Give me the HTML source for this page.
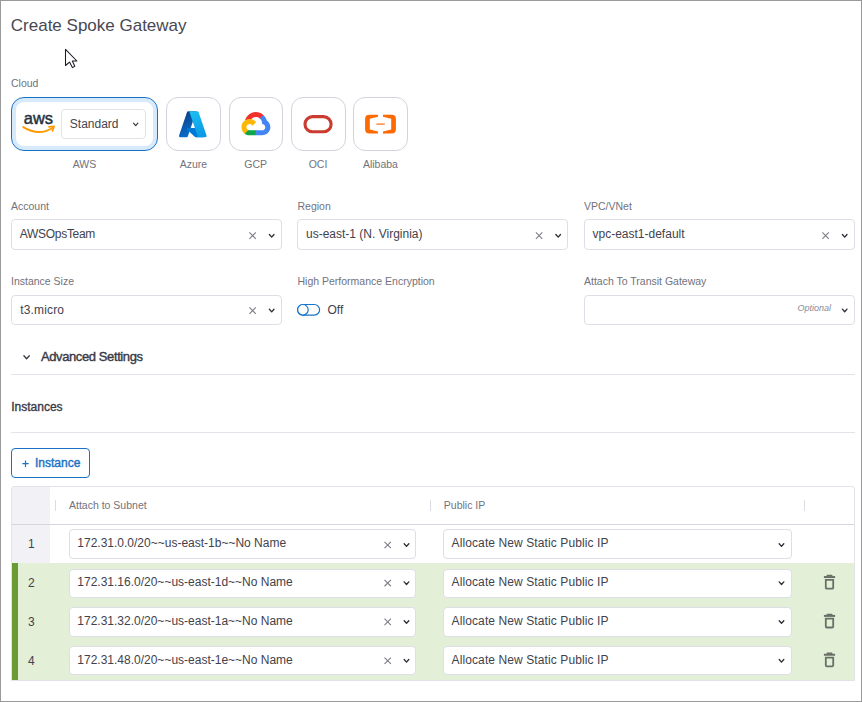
<!DOCTYPE html>
<html>
<head>
<meta charset="utf-8">
<style>
html,body{margin:0;padding:0;}
body{width:862px;height:702px;position:relative;overflow:hidden;background:#fff;font-family:"Liberation Sans",sans-serif;}
.frame{position:absolute;left:0;top:0;width:860px;height:700px;border:1px solid #9a9a9a;}
.t{position:absolute;white-space:nowrap;line-height:1;}
.lbl{font-size:10.5px;color:#72727c;}
.val{font-size:12px;color:#42424c;}
.card{position:absolute;box-sizing:border-box;top:97px;height:54px;width:54.5px;border:1px solid #d3d3de;border-radius:12px;background:#fff;}
.inp{position:absolute;box-sizing:border-box;border:1px solid #dedee6;border-radius:4px;background:#fff;}
svg{position:absolute;overflow:visible;}
</style>
</head>
<body>
<div class="frame"></div>

<!-- Title -->
<div class="t" style="left:10.8px;top:16.6px;font-size:17px;color:#484853;">Create Spoke Gateway</div>

<!-- Cloud -->
<div class="t lbl" style="left:11px;top:77.8px;">Cloud</div>

<!-- AWS card -->
<div style="position:absolute;left:11px;top:97px;width:147px;height:54px;box-sizing:border-box;border:1px solid #1a72c6;border-radius:13px;box-shadow:inset 0 0 0 4px #d7eafb;background:#fff;"></div>
<div class="inp" style="left:61.4px;top:109.3px;width:84.2px;height:29.5px;border-color:#e2e2e8;"></div>
<div class="t" style="left:69.8px;top:117.7px;font-size:12px;color:#45454f;">Standard</div>
<div class="card" style="left:166px;"></div>
<div class="card" style="left:228.5px;"></div>
<div class="card" style="left:291px;"></div>
<div class="card" style="left:353.3px;"></div>

<div class="t lbl" style="left:84.5px;top:159px;transform:translateX(-50%);">AWS</div>
<div class="t lbl" style="left:193.5px;top:159px;transform:translateX(-50%);">Azure</div>
<div class="t lbl" style="left:255.7px;top:159px;transform:translateX(-50%);">GCP</div>
<div class="t lbl" style="left:318px;top:159px;transform:translateX(-50%);">OCI</div>
<div class="t lbl" style="left:380.4px;top:159px;transform:translateX(-50%);">Alibaba</div>

<!-- Row 1 fields -->
<div class="t lbl" style="left:11px;top:201px;">Account</div>
<div class="t lbl" style="left:297.5px;top:201px;">Region</div>
<div class="t lbl" style="left:584px;top:201px;">VPC/VNet</div>
<div class="inp" style="left:11px;top:219px;width:271px;height:30.8px;"></div>
<div class="inp" style="left:297.2px;top:219px;width:271px;height:30.8px;"></div>
<div class="inp" style="left:584px;top:219px;width:271px;height:30.8px;"></div>
<div class="t val" style="left:19.8px;top:227.6px;letter-spacing:-0.3px;">AWSOpsTeam</div>
<div class="t val" style="left:306px;top:227.6px;">us-east-1 (N. Virginia)</div>
<div class="t val" style="left:592.5px;top:227.6px;">vpc-east1-default</div>

<!-- Row 2 fields -->
<div class="t lbl" style="left:11px;top:276px;">Instance Size</div>
<div class="t lbl" style="left:297.5px;top:276px;">High Performance Encryption</div>
<div class="t lbl" style="left:584px;top:276px;">Attach To Transit Gateway</div>
<div class="inp" style="left:11px;top:295px;width:271px;height:29.8px;"></div>
<div class="inp" style="left:584px;top:295px;width:271px;height:29.8px;"></div>
<div class="t val" style="left:20.3px;top:303.7px;letter-spacing:0.15px;">t3.micro</div>
<div class="t val" style="left:327.5px;top:303.5px;">Off</div>
<div class="t" style="left:797.5px;top:304.4px;font-size:9px;font-style:italic;color:#8a8a94;">Optional</div>

<!-- Advanced settings -->
<div class="t" style="left:41px;top:349.8px;font-size:13px;color:#3a3a45;letter-spacing:-0.4px;-webkit-text-stroke:0.4px #3a3a45;">Advanced Settings</div>
<div style="position:absolute;left:11px;top:374px;width:844px;height:1px;background:#e3e3ea;"></div>
<div class="t" style="left:11.2px;top:400.7px;font-size:12px;color:#3a3a45;-webkit-text-stroke:0.35px #3a3a45;">Instances</div>
<div style="position:absolute;left:11px;top:431.5px;width:844px;height:1px;background:#e3e3ea;"></div>

<!-- Button -->
<div style="position:absolute;left:11px;top:448px;width:79px;height:30px;box-sizing:border-box;border:1px solid #1a72c6;border-radius:4px;"></div>
<div class="t" style="left:35px;top:457px;font-size:12px;color:#1a72c6;-webkit-text-stroke:0.4px #1a72c6;">Instance</div>

<!-- Table -->
<div style="position:absolute;left:11px;top:486px;width:844px;height:195px;box-sizing:border-box;border:1px solid #e2e2e9;border-radius:3px 3px 0 0;background:#fff;overflow:hidden;">
  <div style="position:absolute;left:0;top:0;width:38px;height:38.2px;background:#f1f1f6;"></div>
  <div style="position:absolute;left:0;top:37.2px;width:842px;height:1px;background:#d6d6df;"></div>
  <div style="position:absolute;left:0;top:38.2px;width:38px;height:37.8px;background:#f1f1f6;"></div>
  <div style="position:absolute;left:0;top:76px;width:842px;height:117.6px;background:#e3f0d7;"></div>
  <div style="position:absolute;left:0;top:76px;width:6px;height:117.6px;background:#6a9b35;"></div>
  <div style="position:absolute;left:43px;top:13px;width:1px;height:11px;background:#dcdce4;"></div>
  <div style="position:absolute;left:418px;top:13px;width:1px;height:11px;background:#dcdce4;"></div>
  <div style="position:absolute;left:792px;top:13px;width:1px;height:11px;background:#dcdce4;"></div>
</div>
<div class="t lbl" style="left:69px;top:499.7px;">Attach to Subnet</div>
<div class="t lbl" style="left:443.8px;top:500px;">Public IP</div>

<!-- rows -->
<div class="t val" style="left:28px;top:538.2px;">1</div>
<div class="t val" style="left:28px;top:576.9px;">2</div>
<div class="t val" style="left:28px;top:615.75px;">3</div>
<div class="t val" style="left:28px;top:654.6px;">4</div>

<div class="inp" style="left:69.1px;top:529.2px;width:347px;height:30.3px;"></div>
<div class="inp" style="left:69.1px;top:568.50px;width:347px;height:29.2px;"></div>
<div class="inp" style="left:69.1px;top:607.35px;width:347px;height:29.2px;"></div>
<div class="inp" style="left:69.1px;top:646.20px;width:347px;height:29.2px;"></div>
<div class="inp" style="left:443.2px;top:529.2px;width:348.6px;height:30.3px;"></div>
<div class="inp" style="left:443.2px;top:568.50px;width:348.6px;height:29.2px;"></div>
<div class="inp" style="left:443.2px;top:607.35px;width:348.6px;height:29.2px;"></div>
<div class="inp" style="left:443.2px;top:646.20px;width:348.6px;height:29.2px;"></div>

<div class="t val" style="left:77.3px;top:537.4px;">172.31.0.0/20~~us-east-1b~~No Name</div>
<div class="t val" style="left:77.3px;top:576.1px;">172.31.16.0/20~~us-east-1d~~No Name</div>
<div class="t val" style="left:77.3px;top:614.95px;">172.31.32.0/20~~us-east-1a~~No Name</div>
<div class="t val" style="left:77.3px;top:653.8px;">172.31.48.0/20~~us-east-1e~~No Name</div>
<div class="t val" style="left:451.6px;top:537.4px;letter-spacing:0.1px;">Allocate New Static Public IP</div>
<div class="t val" style="left:451.6px;top:576.1px;letter-spacing:0.1px;">Allocate New Static Public IP</div>
<div class="t val" style="left:451.6px;top:614.95px;letter-spacing:0.1px;">Allocate New Static Public IP</div>
<div class="t val" style="left:451.6px;top:653.8px;letter-spacing:0.1px;">Allocate New Static Public IP</div>

<!-- ICONS overlay -->
<svg width="862" height="702" style="left:0;top:0;" viewBox="0 0 862 702">
<path d="M65.5 49.3 L65.5 65.5 L69.5 62.1 L72.4 67.6 L74.8 66.3 L72.3 61.1 L76.9 61.0 Z" fill="#fff" stroke="#1b1b26" stroke-width="1.05" stroke-linejoin="round"/>
<text x="23.8" y="123.8" font-family="Liberation Sans" font-weight="normal" font-size="16.2" fill="#252f3e" stroke="#252f3e" stroke-width="0.45" textLength="29.2" lengthAdjust="spacingAndGlyphs">aws</text>
<path d="M23.3 127.1 Q38.5 136.6 52.3 128.0" fill="none" stroke="#ff9900" stroke-width="1.9" stroke-linecap="round"/>
<path d="M49.0 126.9 L54.1 126.3 L52.5 130.9" fill="none" stroke="#ff9900" stroke-width="1.7" stroke-linecap="round" stroke-linejoin="round"/>
<defs>
<linearGradient id="az1" x1="0" y1="0" x2="0.3" y2="1"><stop offset="0" stop-color="#0b3c82"/><stop offset="1" stop-color="#0a6cc8"/></linearGradient>
<linearGradient id="az2" x1="0" y1="0" x2="0.3" y2="1"><stop offset="0" stop-color="#1cc0f2"/><stop offset="1" stop-color="#0c9ce7"/></linearGradient>
</defs>
<g transform="translate(177.75 109.2) scale(0.3135)">
<path fill="url(#az1)" d="M33.338 6.544h26.038l-27.03 80.087a4.152 4.152 0 0 1-3.933 2.824H8.149a4.145 4.145 0 0 1-3.928-5.47L29.404 9.368a4.152 4.152 0 0 1 3.934-2.825z"/>
<path fill="#0078d4" d="M71.175 60.261h-41.29a1.911 1.911 0 0 0-1.305 3.309l26.532 24.764a4.171 4.171 0 0 0 2.846 1.121h23.38z"/>
<path fill="url(#az2)" d="M66.595 9.364a4.145 4.145 0 0 0-3.928-2.82H33.648a4.146 4.146 0 0 1 3.928 2.820l25.184 74.62a4.146 4.146 0 0 1-3.928 5.472h29.02a4.146 4.146 0 0 0 3.927-5.472z"/>
</g>
<g transform="translate(241.5 112.1) scale(0.0121)">
<path fill="#f0312c" d="M1513.8,528.7h72.8l207.4-207.4l10.2-88c-385.9-340.6-975-303.9-1315.6,82C393.9,422.5,325.2,550,287.8,688c23.1-9.5,48.7-11,72.8-4.4l414.7-68.4c0,0,21.1-34.9,32-32.7c184.5-202.6,495-226.2,708-53.8H1513.8z"/>
<path fill="#4285f4" d="M2089.4,688c-47.7-175.5-145.5-333.3-281.6-454l-291,291c122.9,100.4,192.9,251.7,189.9,410.4v51.7c143.1,0,259,116,259,259c0,143.1-116,259-259,259h-518.1l-51.7,52.4v310.7l51.7,51.7h518.1c297,2.3,560.4-190.2,648.4-473.8C2443.4,1162.4,2335.2,854.4,2089.4,688L2089.4,688z"/>
<path fill="#0fa548" d="M669.8,1917h518.1v-414.7H669.8c-36.9,0-73.4-7.9-107-23.3l-72.8,22.5l-208.8,207.4l-18.2,72.8C380.1,1870.7,523,1917.7,669.8,1917L669.8,1917z"/>
<path fill="#fdb603" d="M669.8,571.6c-287.8,1.7-542.7,186-634.5,458.7c-91.8,272.7-0.3,573.7,227.8,749.1l300.5-300.5c-130.4-58.9-188.3-212.3-129.4-342.7c58.9-130.4,212.3-188.3,342.7-129.4c57.4,25.9,103.4,72,129.4,129.4l300.5-300.5C1078.9,668.6,880.2,570.9,669.8,571.6L669.8,571.6z"/>
</g>
<rect x="305" y="116.6" width="26.1" height="15.2" rx="7.6" fill="none" stroke="#ca3b30" stroke-width="3.1"/>
<path fill="#ff6a00" d="M378 114.8 L369.3 114.8 Q365.1 114.8 365.1 119 L365.1 129.3 Q365.1 133.5 369.3 133.5 L378 133.5 L378 131.6 L369.8 129.6 L369.8 118.7 L378 116.7 Z"/>
<path fill="#ff6a00" d="M383 114.8 L391.7 114.8 Q395.9 114.8 395.9 119 L395.9 129.3 Q395.9 133.5 391.7 133.5 L383 133.5 L383 131.6 L391.2 129.6 L391.2 118.7 L383 116.7 Z"/>
<rect x="376.4" y="123.4" width="8.4" height="1.5" fill="#ff8a45"/>
<path d="M133.50 123.10 L135.70 125.70 L137.90 123.10" fill="none" stroke="#3a3a45" stroke-width="1.2" stroke-linecap="round" stroke-linejoin="round"/>
<path d="M249.40 232.40 L255.80 238.80 M255.80 232.40 L249.40 238.80" fill="none" stroke="#7d7d88" stroke-width="1.1"/>
<path d="M269.40 234.50 L271.70 237.10 L274.00 234.50" fill="none" stroke="#2f2f3a" stroke-width="1.35" stroke-linecap="round" stroke-linejoin="round"/>
<path d="M535.90 232.40 L542.30 238.80 M542.30 232.40 L535.90 238.80" fill="none" stroke="#7d7d88" stroke-width="1.1"/>
<path d="M555.90 234.50 L558.20 237.10 L560.50 234.50" fill="none" stroke="#2f2f3a" stroke-width="1.35" stroke-linecap="round" stroke-linejoin="round"/>
<path d="M822.40 232.40 L828.80 238.80 M828.80 232.40 L822.40 238.80" fill="none" stroke="#7d7d88" stroke-width="1.1"/>
<path d="M842.40 234.50 L844.70 237.10 L847.00 234.50" fill="none" stroke="#2f2f3a" stroke-width="1.35" stroke-linecap="round" stroke-linejoin="round"/>
<path d="M249.40 307.40 L255.80 313.80 M255.80 307.40 L249.40 313.80" fill="none" stroke="#7d7d88" stroke-width="1.1"/>
<path d="M269.40 309.30 L271.70 311.90 L274.00 309.30" fill="none" stroke="#2f2f3a" stroke-width="1.35" stroke-linecap="round" stroke-linejoin="round"/>
<path d="M842.40 309.10 L844.70 311.70 L847.00 309.10" fill="none" stroke="#2f2f3a" stroke-width="1.35" stroke-linecap="round" stroke-linejoin="round"/>
<rect x="297.6" y="304.5" width="22" height="10.6" rx="5.3" fill="#fff" stroke="#1474cc" stroke-width="1.2"/>
<circle cx="302.9" cy="309.8" r="5.3" fill="#fff" stroke="#1474cc" stroke-width="1.2"/>
<path d="M23.90 355.80 L26.60 358.80 L29.30 355.80" fill="none" stroke="#3a3a45" stroke-width="1.3" stroke-linecap="round" stroke-linejoin="round"/>
<path d="M25.5 460.5 V467 M22.3 463.7 H28.7" stroke="#1a72c6" stroke-width="1.2"/>
<path d="M384.50 541.80 L390.90 548.20 M390.90 541.80 L384.50 548.20" fill="none" stroke="#7d7d88" stroke-width="1.1"/>
<path d="M404.20 543.80 L406.50 546.40 L408.80 543.80" fill="none" stroke="#2f2f3a" stroke-width="1.35" stroke-linecap="round" stroke-linejoin="round"/>
<path d="M779.20 543.80 L781.50 546.40 L783.80 543.80" fill="none" stroke="#2f2f3a" stroke-width="1.35" stroke-linecap="round" stroke-linejoin="round"/>
<path d="M384.50 579.85 L390.90 586.25 M390.90 579.85 L384.50 586.25" fill="none" stroke="#7d7d88" stroke-width="1.1"/>
<path d="M404.20 581.85 L406.50 584.45 L408.80 581.85" fill="none" stroke="#2f2f3a" stroke-width="1.35" stroke-linecap="round" stroke-linejoin="round"/>
<path d="M779.20 581.85 L781.50 584.45 L783.80 581.85" fill="none" stroke="#2f2f3a" stroke-width="1.35" stroke-linecap="round" stroke-linejoin="round"/>
<path d="M823.90 577.05 H835.10" stroke="#6b6f68" stroke-width="2"/>
<path d="M827.30 575.65 H831.70" stroke="#6b6f68" stroke-width="1.6" stroke-linecap="round"/>
<path d="M825.80 579.85 V587.65 Q825.80 588.65 826.80 588.65 H832.20 Q833.20 588.65 833.20 587.65 V579.85 Z" fill="none" stroke="#6b6f68" stroke-width="1.8"/>
<path d="M384.50 618.70 L390.90 625.10 M390.90 618.70 L384.50 625.10" fill="none" stroke="#7d7d88" stroke-width="1.1"/>
<path d="M404.20 620.70 L406.50 623.30 L408.80 620.70" fill="none" stroke="#2f2f3a" stroke-width="1.35" stroke-linecap="round" stroke-linejoin="round"/>
<path d="M779.20 620.70 L781.50 623.30 L783.80 620.70" fill="none" stroke="#2f2f3a" stroke-width="1.35" stroke-linecap="round" stroke-linejoin="round"/>
<path d="M823.90 615.90 H835.10" stroke="#6b6f68" stroke-width="2"/>
<path d="M827.30 614.50 H831.70" stroke="#6b6f68" stroke-width="1.6" stroke-linecap="round"/>
<path d="M825.80 618.70 V626.50 Q825.80 627.50 826.80 627.50 H832.20 Q833.20 627.50 833.20 626.50 V618.70 Z" fill="none" stroke="#6b6f68" stroke-width="1.8"/>
<path d="M384.50 657.55 L390.90 663.95 M390.90 657.55 L384.50 663.95" fill="none" stroke="#7d7d88" stroke-width="1.1"/>
<path d="M404.20 659.55 L406.50 662.15 L408.80 659.55" fill="none" stroke="#2f2f3a" stroke-width="1.35" stroke-linecap="round" stroke-linejoin="round"/>
<path d="M779.20 659.55 L781.50 662.15 L783.80 659.55" fill="none" stroke="#2f2f3a" stroke-width="1.35" stroke-linecap="round" stroke-linejoin="round"/>
<path d="M823.90 654.75 H835.10" stroke="#6b6f68" stroke-width="2"/>
<path d="M827.30 653.35 H831.70" stroke="#6b6f68" stroke-width="1.6" stroke-linecap="round"/>
<path d="M825.80 657.55 V665.35 Q825.80 666.35 826.80 666.35 H832.20 Q833.20 666.35 833.20 665.35 V657.55 Z" fill="none" stroke="#6b6f68" stroke-width="1.8"/>
</svg>

</body>
</html>
